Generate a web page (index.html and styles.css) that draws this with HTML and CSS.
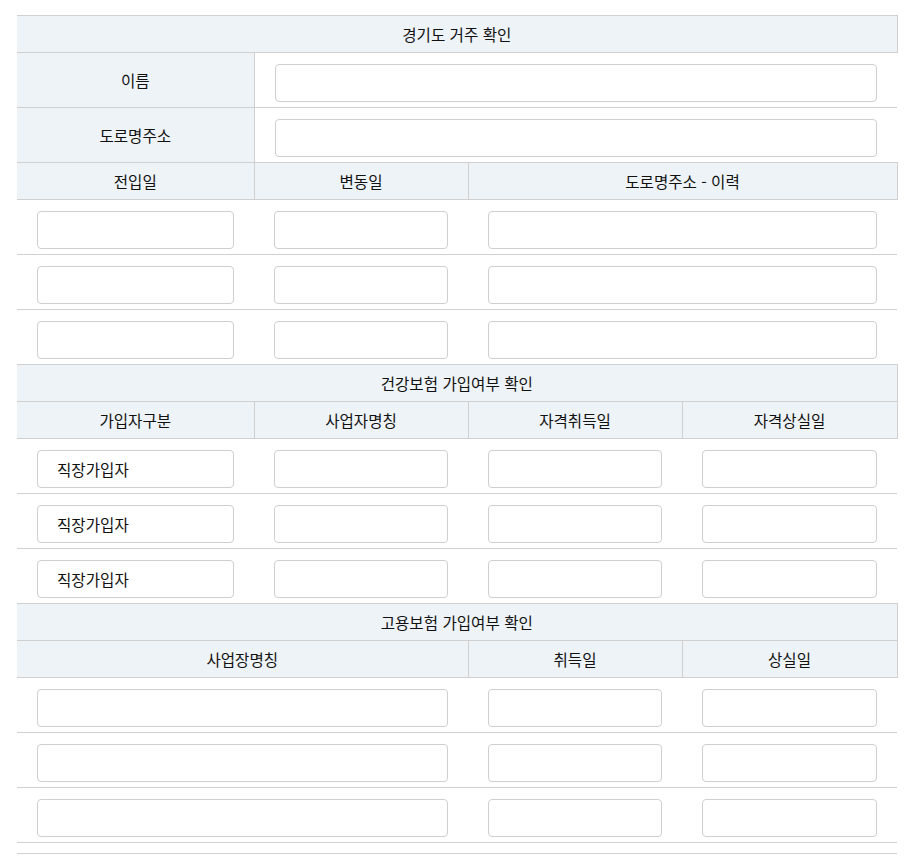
FILE: index.html
```html
<!DOCTYPE html>
<html lang="ko">
<head>
<meta charset="utf-8">
<link rel="stylesheet" href="styles.css">
</head>
<body>
<div class="wrap">
<table class="form-table">
  <colgroup>
    <col class="c1"><col class="c2"><col class="c3"><col class="c4">
  </colgroup>
  <tr><th colspan="4" class="title">경기도 거주 확인</th></tr>
  <tr><th class="label">이름</th><td colspan="3"><input class="field" type="text"></td></tr>
  <tr><th class="label">도로명주소</th><td colspan="3"><input class="field" type="text"></td></tr>
  <tr><th>전입일</th><th>변동일</th><th colspan="2">도로명주소 - 이력</th></tr>
  <tr><td><input class="field"></td><td><input class="field"></td><td colspan="2"><input class="field"></td></tr>
  <tr><td><input class="field"></td><td><input class="field"></td><td colspan="2"><input class="field"></td></tr>
  <tr><td><input class="field"></td><td><input class="field"></td><td colspan="2"><input class="field"></td></tr>

  <tr><th colspan="4" class="title">건강보험 가입여부 확인</th></tr>
  <tr><th>가입자구분</th><th>사업자명칭</th><th>자격취득일</th><th>자격상실일</th></tr>
  <tr><td><input class="field" value="직장가입자"></td><td><input class="field"></td><td><input class="field"></td><td><input class="field"></td></tr>
  <tr><td><input class="field" value="직장가입자"></td><td><input class="field"></td><td><input class="field"></td><td><input class="field"></td></tr>
  <tr><td><input class="field" value="직장가입자"></td><td><input class="field"></td><td><input class="field"></td><td><input class="field"></td></tr>

  <tr><th colspan="4" class="title">고용보험 가입여부 확인</th></tr>
  <tr><th colspan="2">사업장명칭</th><th>취득일</th><th>상실일</th></tr>
  <tr><td colspan="2"><input class="field"></td><td><input class="field"></td><td><input class="field"></td></tr>
  <tr><td colspan="2"><input class="field"></td><td><input class="field"></td><td><input class="field"></td></tr>
  <tr><td colspan="2"><input class="field"></td><td><input class="field"></td><td><input class="field"></td></tr>
  <tr class="spacer"><td colspan="4"></td></tr>
</table>
</div>
</body>
</html>
```

FILE: styles.css
```css
html, body {
  margin: 0;
  padding: 0;
  background: #fff;
}
body {
  font-family: "Noto Sans CJK KR", "Noto Sans", sans-serif;
  font-size: 15.6px;
  color: #111;
}
.wrap {
  padding: 15px 14px 0 17px;
}
.form-table {
  width: 880px;
  border-collapse: collapse;
  table-layout: fixed;
}
.c1 { width: 237px; }
.c2 { width: 214px; }
.c3 { width: 214px; }
.c4 { width: 215px; }

.form-table th {
  background: #eef3f7;
  font-weight: normal;
  color: #111;
  height: 36px;
  padding: 0;
  line-height: 20px;
  text-align: center;
  border-top: 1px solid #d0d0d0;
  border-bottom: 1px solid #d0d0d0;
  border-right: 1px solid #d0d0d0;
  border-left: none;
}
.form-table th.label {
  height: 54px;
}
.form-table td {
  padding: 11px 20px 5px 20px;
  border-bottom: 1px solid #d0d0d0;
  vertical-align: top;
}
.field {
  display: block;
  box-sizing: border-box;
  width: 100%;
  height: 38px;
  margin: 0;
  border: 1px solid #cfcfcf;
  border-radius: 4px;
  background: #fff;
  padding: 0 19px;
  font-family: "Noto Sans CJK KR", "Noto Sans", sans-serif;
  font-size: 15.6px;
  color: #111;
  outline: none;
}
.form-table tr.spacer td {
  padding: 0;
  height: 10px;
}
```
